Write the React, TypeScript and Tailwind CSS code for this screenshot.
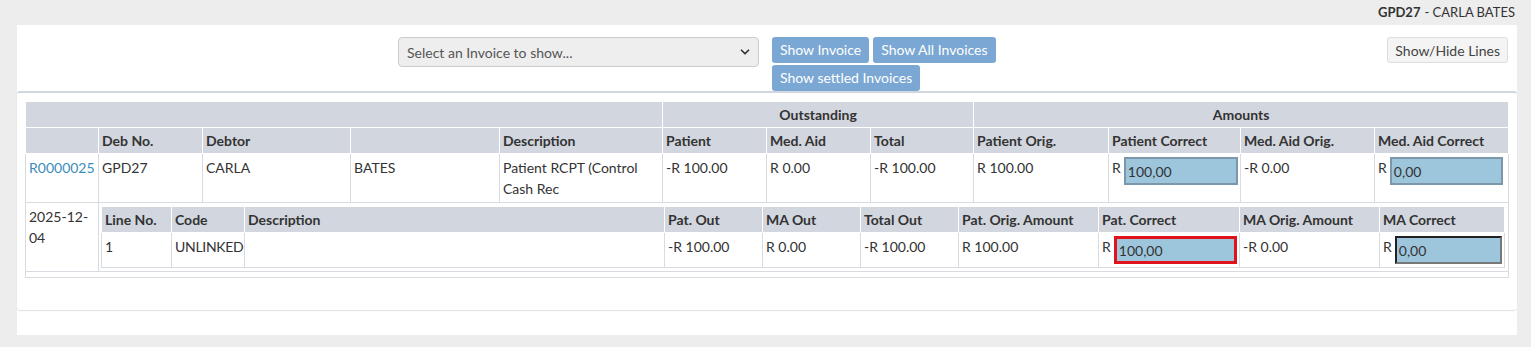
import { ChevronDown } from 'lucide-react';

const outerCols = [73, 104, 148, 149, 163, 104, 104, 103, 135, 132, 134, 134];
const innerCols = [70, 73, 420, 98, 98, 98, 140, 141, 140, 125];

const th = 'bg-[#d2d6de] border border-white px-[3px] py-[2px] font-bold leading-[21px] whitespace-nowrap';
const td = 'border border-[#d8dce2] px-[3px] py-[3px] align-top leading-[21px]';

function AmountInput({ value, tone, width }: { value: string; tone: 'normal' | 'error' | 'focus'; width: string }) {
  const border =
    tone === 'error'
      ? 'border-[3px] border-[#e0131b]'
      : tone === 'focus'
        ? 'border-2 border-t-[#222] border-l-[#222] border-b-[#777] border-r-[#777]'
        : 'border-2 border-[#7d97aa]';
  return (
    <div className="flex items-start gap-[3px]">
      <span className="leading-[21px]">R</span>
      <div className={`${width} h-[28px] bg-[#9dc6dd] ${border} flex items-center px-[2px] text-[#333]`}>
        {value}
      </div>
    </div>
  );
}

export default function App() {
  return (
    <div
      className="min-h-screen bg-[#ededed] text-[14px] text-[#333]"
      style={{ fontFamily: 'Lato, "Source Sans Pro", "Liberation Sans", sans-serif' }}
    >
      {/* Patient header */}
      <div className="h-[25px] flex items-center justify-end pr-[16px] text-[13px] text-[#333]">
        <span className="font-bold">GPD27</span>
        <span className="ml-[4px]">- CARLA BATES</span>
      </div>

      <div className="mx-[17px] w-[1500px] bg-white pb-[25px]">
        {/* Controls */}
        <div className="grid grid-cols-4 h-[66px] pt-[12px]">
          <div />
          <div className="pl-[6px] pr-[8px]">
            <div className="h-[30px] bg-[#eeeeee] border border-[#cccccc] rounded-[4px] flex items-center justify-between pl-[8px] pr-[6px] text-[#555]">
              <span>Select an Invoice to show...</span>
              <ChevronDown className="w-[14px] h-[14px] text-[#333]" strokeWidth={3} />
            </div>
          </div>
          <div className="pl-[5px] flex flex-wrap content-start gap-x-[4px] gap-y-[2px]">
            <button className="h-[26px] px-[8px] bg-[#7aa7d3] text-white rounded-[3px] leading-[26px]">Show Invoice</button>
            <button className="h-[26px] px-[8px] bg-[#7aa7d3] text-white rounded-[3px] leading-[26px]">Show All Invoices</button>
            <button className="h-[26px] px-[8px] bg-[#7aa7d3] text-white rounded-[3px] leading-[26px]">Show settled Invoices</button>
          </div>
          <div className="flex justify-end items-start pr-[9px]">
            <button className="h-[26px] px-[7px] bg-[#f4f4f4] border border-[#dddddd] text-[#444] rounded-[3px]">Show/Hide Lines</button>
          </div>
        </div>

        {/* Invoice box */}
        <div className="border-t-2 border-[#d2d6de] rounded-[3px] shadow-[0_1px_1px_rgba(0,0,0,0.12)] pl-[8px] pr-[9px] pt-[8px] pb-[32px]">
          <table className="table-fixed border-collapse w-[1483px] border border-[#d8dce2]">
            <colgroup>
              {outerCols.map((w, i) => (
                <col key={i} style={{ width: w }} />
              ))}
            </colgroup>
            <thead>
              <tr>
                <th className={th} colSpan={5}></th>
                <th className={`${th} text-center`} colSpan={3}>Outstanding</th>
                <th className={`${th} text-center`} colSpan={4}>Amounts</th>
              </tr>
              <tr className="text-left">
                <th className={th}></th>
                <th className={th}>Deb No.</th>
                <th className={th}>Debtor</th>
                <th className={th}></th>
                <th className={th}>Description</th>
                <th className={th}>Patient</th>
                <th className={th}>Med. Aid</th>
                <th className={th}>Total</th>
                <th className={th}>Patient Orig.</th>
                <th className={th}>Patient Correct</th>
                <th className={th}>Med. Aid Orig.</th>
                <th className={th}>Med. Aid Correct</th>
              </tr>
            </thead>
            <tbody>
              <tr>
                <td className={`${td} text-[#3c8dbc]`}>R0000025</td>
                <td className={td}>GPD27</td>
                <td className={td}>CARLA</td>
                <td className={td}>BATES</td>
                <td className={td}>Patient RCPT (Control Cash Rec</td>
                <td className={td}>-R 100.00</td>
                <td className={td}>R 0.00</td>
                <td className={td}>-R 100.00</td>
                <td className={td}>R 100.00</td>
                <td className={`${td} pr-[2px]`}>
                  <AmountInput value="100,00" tone="normal" width="w-[115px]" />
                </td>
                <td className={td}>-R 0.00</td>
                <td className={`${td} pr-[2px]`}>
                  <AmountInput value="0,00" tone="normal" width="w-[113px]" />
                </td>
              </tr>

              {/* Invoice lines */}
              <tr>
                <td className={td}>2025-12-04</td>
                <td className="border border-[#d8dce2] pl-[2px] pr-[3px] py-[3px]" colSpan={11}>
                  <table className="table-fixed border-collapse w-[1403px] border border-[#d8dce2]">
                    <colgroup>
                      {innerCols.map((w, i) => (
                        <col key={i} style={{ width: w }} />
                      ))}
                    </colgroup>
                    <thead>
                      <tr className="text-left">
                        <th className={th}>Line No.</th>
                        <th className={th}>Code</th>
                        <th className={th}>Description</th>
                        <th className={th}>Pat. Out</th>
                        <th className={th}>MA Out</th>
                        <th className={th}>Total Out</th>
                        <th className={th}>Pat. Orig. Amount</th>
                        <th className={th}>Pat. Correct</th>
                        <th className={th}>MA Orig. Amount</th>
                        <th className={th}>MA Correct</th>
                      </tr>
                    </thead>
                    <tbody>
                      <tr>
                        <td className={`${td} h-[34px]`}>1</td>
                        <td className={`${td} tracking-[-0.3px]`}>UNLINKED</td>
                        <td className={td}></td>
                        <td className={td}>-R 100.00</td>
                        <td className={td}>R 0.00</td>
                        <td className={td}>-R 100.00</td>
                        <td className={td}>R 100.00</td>
                        <td className={`${td} pr-[2px]`}>
                          <AmountInput value="100,00" tone="error" width="w-[124px]" />
                        </td>
                        <td className={td}>-R 0.00</td>
                        <td className={`${td} pr-[2px]`}>
                          <AmountInput value="0,00" tone="focus" width="w-[109px]" />
                        </td>
                      </tr>
                    </tbody>
                  </table>
                </td>
              </tr>
              <tr>
                <td className="border border-[#d8dce2] h-[6px]" colSpan={12}></td>
              </tr>
            </tbody>
          </table>
        </div>
      </div>
    </div>
  );
}
